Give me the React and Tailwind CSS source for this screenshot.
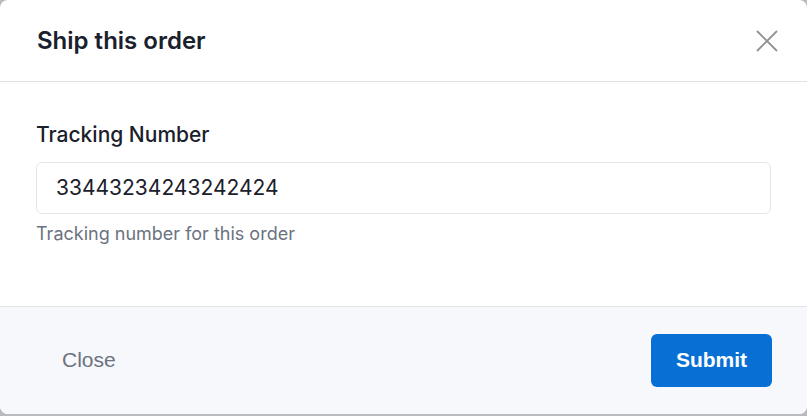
export default function App() {
  return (
    <div className="h-[416px] w-[807px] bg-[#b9babd]" style={{ fontFamily: 'Inter, sans-serif' }}>
      <div className="flex h-[414px] flex-col overflow-hidden rounded-lg bg-white">
        {/* Header */}
        <div className="flex h-[82px] items-center justify-between border-b border-[#dfe1e5] pl-[37px] pr-[29px]">
          <h2 className="text-[24px] font-semibold text-[#1a202c]">Ship this order</h2>
          <button className="text-[#8e9195]">
            <svg width="22" height="22" viewBox="0 0 22 22" fill="none" stroke="currentColor" strokeWidth="1.8">
              <path d="M1 1L21 21M21 1L1 21" />
            </svg>
          </button>
        </div>

        {/* Body */}
        <div className="flex flex-1 flex-col px-[36px] pt-[37px]">
          <label className="text-[21px] font-medium text-[#1a202c]">Tracking Number</label>
          <input
            className="mt-[11px] h-[52px] w-full rounded-md border border-[#e2e4e8] px-[19px] text-[21px] text-[#1a202c] outline-none"
            defaultValue="33443234243242424"
          />
          <p className="mt-[6px] text-[18px] text-[#6b7280]">Tracking number for this order</p>
        </div>

        {/* Footer */}
        <div className="flex h-[108px] items-center justify-between border-t border-[#e2e4e8] bg-[#f6f8fb] pl-[38px] pr-[35px]">
          <button className="px-6 pb-[2px] text-[21px] text-[#6b7280]" style={{ fontFamily: '"Liberation Sans", Arial, sans-serif' }}>
            Close
          </button>
          <button
            className="h-[53px] w-[121px] rounded-md bg-[#0870d4] pb-[1px] text-[21px] font-bold text-white"
            style={{ fontFamily: '"Liberation Sans", Arial, sans-serif' }}
          >
            Submit
          </button>
        </div>
      </div>
    </div>
  )
}
